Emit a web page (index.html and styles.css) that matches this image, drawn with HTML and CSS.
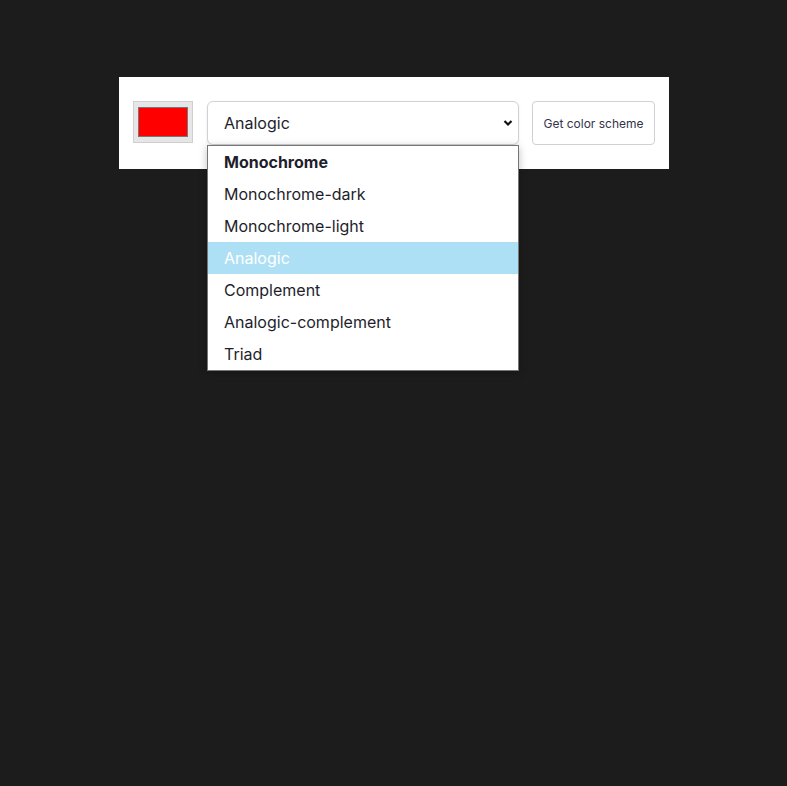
FILE: index.html
```html
<!DOCTYPE html>
<html>
<head>
<meta charset="utf-8">
<link rel="stylesheet" href="styles.css">
</head>
<body>
<main class="page">
  <form class="panel">
    <div class="swatch"><div class="swatch-color"></div></div>
    <div class="select-wrap">
      <div class="select">
        <span>Analogic</span>
        <svg class="chev" width="10" height="8" viewBox="0 0 10 8"><path d="M1.5 2 L5 5.5 L8.5 2" fill="none" stroke="#111" stroke-width="2.2"/></svg>
      </div>
      <ul class="menu">
        <li class="opt bold">Monochrome</li>
        <li class="opt">Monochrome-dark</li>
        <li class="opt">Monochrome-light</li>
        <li class="opt active">Analogic</li>
        <li class="opt">Complement</li>
        <li class="opt">Analogic-complement</li>
        <li class="opt">Triad</li>
      </ul>
    </div>
    <button class="btn" type="button">Get color scheme</button>
  </form>
</main>
</body>
</html>
```
FILE: styles.css
```css
* { box-sizing: border-box; }
html, body { margin: 0; padding: 0; }
body {
  background: #1c1c1c;
  font-family: Inter, "Noto Sans", sans-serif;
  width: 787px;
  height: 786px;
  overflow: hidden;
}
.page {
  padding-top: 77px;
  padding-left: 119px;
}
.panel {
  width: 550px;
  height: 92px;
  background: #fff;
  padding: 24px 14px;
  display: flex;
  align-items: flex-start;
}
.swatch {
  width: 60px;
  height: 42px;
  background: #e6e6e6;
  border: 1px solid #cfcfcf;
  padding: 5px 4px;
  margin-right: 14px;
}
.swatch-color {
  width: 100%;
  height: 100%;
  background: #ff0000;
  border: 1px solid #777;
}
.select-wrap {
  position: relative;
  width: 312px;
  margin-right: 13px;
}
.select {
  height: 44px;
  border: 1px solid #d0d0d6;
  border-radius: 6px;
  display: flex;
  align-items: center;
  justify-content: space-between;
  padding: 0 5px 0 16px;
  font-size: 16px;
  color: #1e1e2c;
  box-shadow: 0 1px 3px rgba(0,0,0,0.08);
}
.chev { display: block; }
.menu {
  position: absolute;
  top: 44px;
  left: 0;
  width: 312px;
  margin: 0;
  padding: 0;
  list-style: none;
  background: #fff;
  border: 1px solid #767676;
  box-shadow: 0 2px 8px rgba(0,0,0,0.25);
  z-index: 2;
}
.opt {
  height: 32px;
  line-height: 32px;
  padding-left: 16px;
  font-size: 16px;
  color: #1e1e2c;
}
.opt.bold { font-weight: 700; }
.opt.active {
  background: #ade0f4;
  color: #fff;
}
.btn {
  width: 123px;
  height: 44px;
  background: #fff;
  border: 1px solid #d0d0d6;
  border-radius: 4px;
  font-family: Inter, "Noto Sans", sans-serif;
  font-size: 12px;
  color: #33334a;
  padding: 0;
}
```
